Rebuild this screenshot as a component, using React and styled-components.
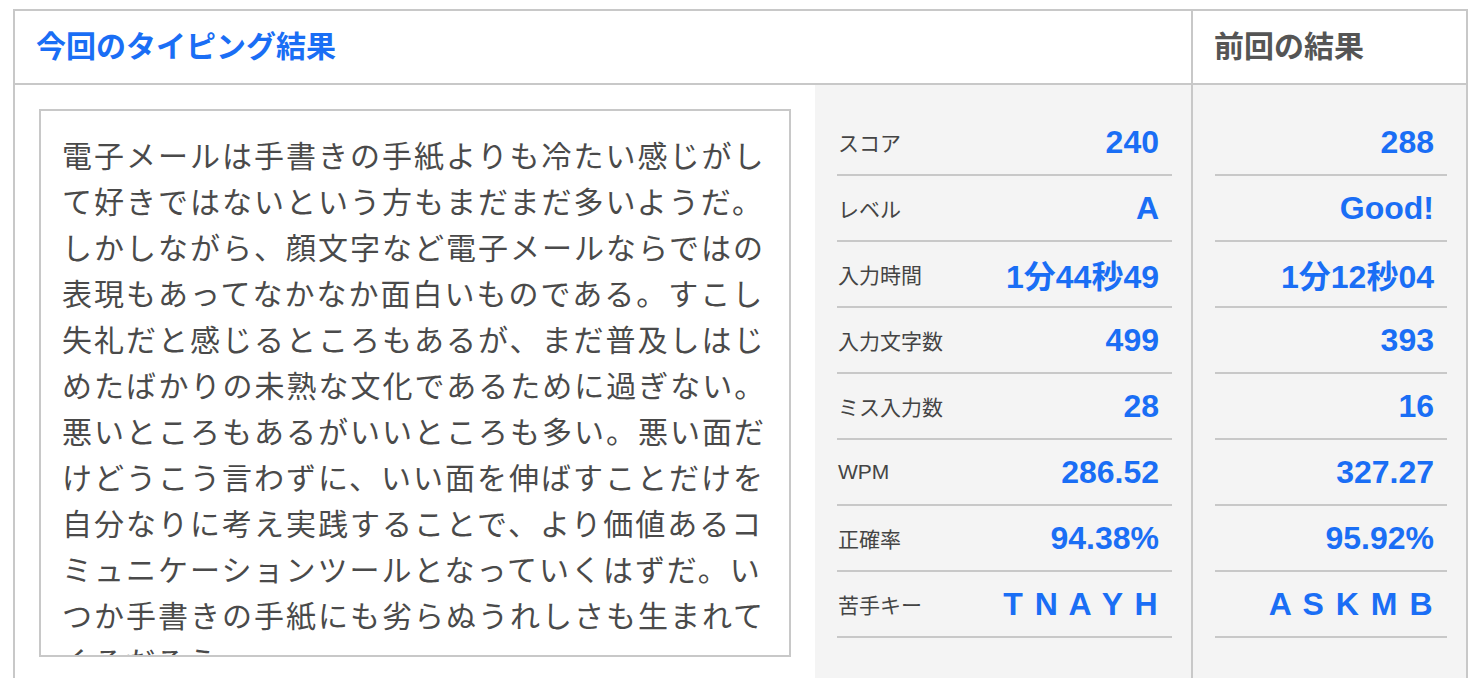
import React from 'react';
import styled, { createGlobalStyle } from 'styled-components';

const GlobalStyle = createGlobalStyle`
    html, body {
        margin: 0;
        padding: 0;
        background: #ffffff;
        overflow: hidden;
    }
    body {
        font-family: "Liberation Sans", "Noto Sans CJK JP", sans-serif;
        color: #444444;
    }
`;

const current = [
    { label: 'スコア', value: '240' },
    { label: 'レベル', value: 'A' },
    { label: '入力時間', value: '1分44秒49' },
    { label: '入力文字数', value: '499' },
    { label: 'ミス入力数', value: '28' },
    { label: 'WPM', value: '286.52' },
    { label: '正確率', value: '94.38%' },
    { label: '苦手キー', value: 'T N A Y H', keys: true }
];

const previous = ['288', 'Good!', '1分12秒04', '393', '16', '327.27', '95.92%', 'A S K M B'];

const passage =
    '電子メールは手書きの手紙よりも冷たい感じがして好きではないという方もまだまだ多いようだ。' +
    'しかしながら、顔文字など電子メールならではの表現もあってなかなか面白いものである。' +
    'すこし失礼だと感じるところもあるが、まだ普及しはじめたばかりの未熟な文化であるために過ぎない。' +
    '悪いところもあるがいいところも多い。悪い面だけどうこう言わずに、いい面を伸ばすことだけを' +
    '自分なりに考え実践することで、より価値あるコミュニケーションツールとなっていくはずだ。' +
    'いつか手書きの手紙にも劣らぬうれしさも生まれてくるだろう。';

function App() {
    return (
        <>
            <GlobalStyle />
            <Frame>
                <HeaderCell $span={2}>
                    <Title $accent>今回のタイピング結果</Title>
                </HeaderCell>
                <HeaderCell $divider>
                    <Title>前回の結果</Title>
                </HeaderCell>

                <TextCell>
                    <Passage>{passage}</Passage>
                </TextCell>

                <StatsCol>
                    {current.map((row) => (
                        <StatRow key={row.label}>
                            <Label>{row.label}</Label>
                            <Value $keys={row.keys}>{row.value}</Value>
                        </StatRow>
                    ))}
                </StatsCol>

                <StatsCol $divider>
                    {previous.map((value, i) => (
                        <StatRow key={i}>
                            <Value $keys={i === previous.length - 1}>{value}</Value>
                        </StatRow>
                    ))}
                </StatsCol>
            </Frame>
        </>
    );
}

const Frame = styled.div`
    display: grid;
    grid-template-columns: 800px 376px 275px;
    grid-template-rows: 74px auto;
    width: 1451px;
    margin: 9px 0 0 13px;
    border: 2px solid #c8c8c8;
    border-bottom: none;
`;

const HeaderCell = styled.div`
    grid-column: span ${(props) => props.$span || 1};
    display: flex;
    align-items: center;
    padding: 0 21px;
    background: #ffffff;
    border-bottom: 2px solid #c8c8c8;
    border-left: ${(props) => (props.$divider ? '2px solid #c8c8c8' : 'none')};
`;

const Title = styled.h2`
    margin: 0;
    font-size: 30px;
    font-weight: 700;
    line-height: 1;
    color: ${(props) => (props.$accent ? '#1a6ef5' : '#555555')};
`;

const TextCell = styled.div`
    padding: 24px;
    background: #ffffff;
`;

const Passage = styled.div`
    box-sizing: border-box;
    height: 548px;
    overflow: hidden;
    padding: 20px 20px 0 21px;
    border: 2px solid #c8c8c8;
    font-family: "Noto Sans CJK JP", sans-serif;
    font-size: 30px;
    letter-spacing: 2px;
    line-height: 46px;
    color: #4a4a4a;
`;

const StatsCol = styled.div`
    display: flex;
    flex-direction: column;
    padding: 25px 19px 0 22px;
    background: #f4f4f4;
    border-left: ${(props) => (props.$divider ? '2px solid #c8c8c8' : 'none')};
`;

const StatRow = styled.div`
    display: flex;
    align-items: center;
    justify-content: space-between;
    height: 66px;
    box-sizing: border-box;
    padding: 0 13px 0 1px;
    border-bottom: 2px solid #c8c8c8;
`;

const Label = styled.span`
    font-size: 21px;
    color: #444444;
`;

const Value = styled.span`
    margin-left: auto;
    font-size: 32px;
    font-weight: 700;
    color: #1a6ef5;
    letter-spacing: ${(props) => (props.$keys ? '1.5px' : '0')};
    white-space: pre;
`;

export default App;
